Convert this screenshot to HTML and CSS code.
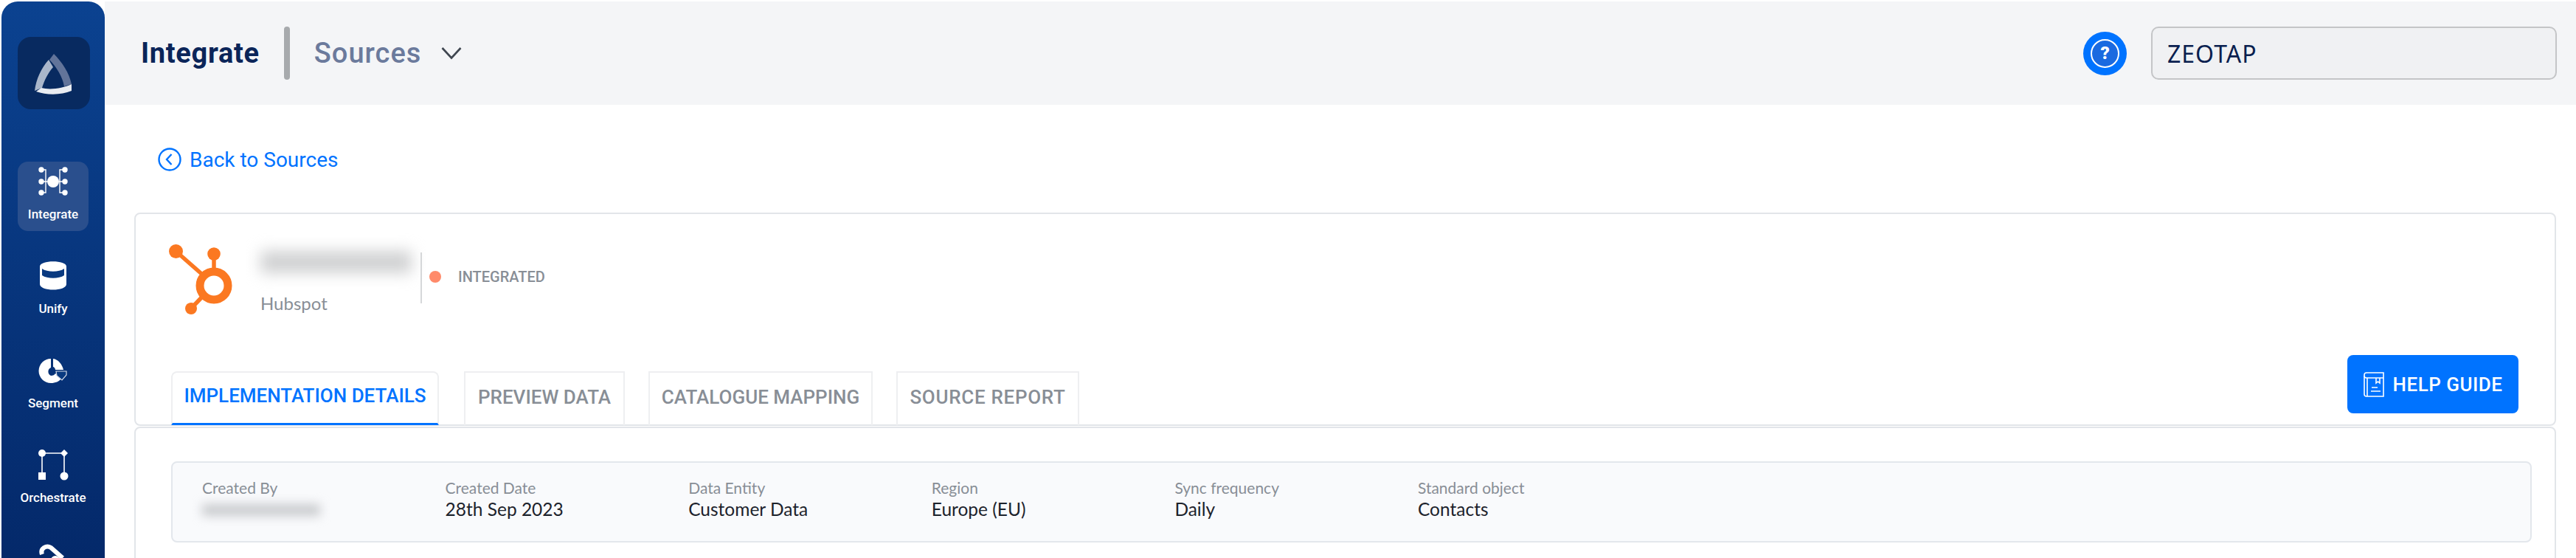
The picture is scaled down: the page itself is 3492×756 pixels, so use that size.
FILE: index.html
```html
<!DOCTYPE html>
<html lang="en">
<head>
    <meta charset="UTF-8">
    <title>Sources</title>
    <link rel="stylesheet" href="styles.css">
</head>
<body>
<div class="app">
    <aside class="sidebar">
        <div class="logo-tile">
            <svg width="60" height="60" viewBox="0 0 60 60">
                <path fill="#62749a" d="M30 4C41 15 51 30 54 45L44 48C42 35 33 21 24 12Z"/>
                <path fill="#a9b6ca" d="M23 12L29 22C22 30 17 40 14 50L4 54C6 38 13 23 23 12Z"/>
                <path fill="#e9ecf1" d="M13 50C24 53 42 51 54 45V54C40 60 20 60 6 55Z"/>
            </svg>
        </div>
        <nav class="nav">
            <a class="nav-item active" href="#">
                <svg width="42" height="42" viewBox="0 0 42 42" fill="none" stroke="#fff" stroke-width="1.400">
                    <path d="M5 5H11V36H5M5 21H13M37 5H30V36H37M37 21H29"/>
                    <g fill="#fff" stroke="none">
                        <circle cx="21" cy="21" r="8"/>
                        <circle cx="5" cy="5" r="3.700"/><circle cx="5" cy="21" r="3.700"/><circle cx="5" cy="36" r="3.700"/>
                        <circle cx="37" cy="5" r="3.700"/><circle cx="37" cy="21" r="3.700"/><circle cx="37" cy="36" r="3.700"/>
                    </g>
                </svg>
                <span>Integrate</span>
            </a>
            <a class="nav-item" href="#">
                <svg width="42" height="42" viewBox="0 0 42 42">
                    <path fill="#fff" d="M3 8C3 -1 39 -1 39 8V32C39 42 3 42 3 32Z"/>
                    <path fill="#0a3a80" d="M6 11C13 16 29 16 36 11V20C29 25 13 25 6 20Z"/>
                </svg>
                <span>Unify</span>
            </a>
            <a class="nav-item" href="#">
                <svg class="icon-low" width="42" height="36" viewBox="0 0 42 36">
                    <path fill="#fff" d="M18 1V13A6 6 0 0 0 18 24C21 24 23 23 24 21L33 27C29 32 24 34 18 34A16.500 16.500 0 0 1 18 1Z"/>
                    <path fill="#fff" d="M21 1C28 2 33 8 35 16H24C24 14 22 12 21 12Z"/>
                    <path fill="#0a3a80" stroke="#d5dbe6" stroke-width="1.200" d="M25 18H39V23L33 30L26 24Z"/>
                </svg>
                <span>Segment</span>
            </a>
            <a class="nav-item" href="#">
                <svg width="42" height="42" viewBox="0 0 42 42" fill="none" stroke="#fff" stroke-width="1.600">
                    <path d="M6 5H36V36M6 5V34"/>
                    <g fill="#fff" stroke="none">
                        <circle cx="6" cy="5" r="5"/>
                        <path d="M36 0L41 5L36 10L31 5Z"/>
                        <rect x="1" y="31" width="10" height="10"/>
                        <circle cx="36" cy="36" r="5.500"/>
                    </g>
                </svg>
                <span>Orchestrate</span>
            </a>
            <a class="nav-item" href="#">
                <svg width="42" height="42" viewBox="0 0 42 42" fill="none" stroke="#fff" stroke-width="6">
                    <path d="M6 14C3 6 12 1 18 5L34 19"/>
                    <circle cx="24" cy="22" r="6" fill="#fff" stroke="none"/>
                </svg>
            </a>
        </nav>
    </aside>

    <div class="main">
        <header class="topbar">
            <div class="crumbs">
                <span class="crumb-title">Integrate</span>
                <span class="crumb-sep"></span>
                <span class="crumb-sub">Sources</span>
                <svg class="crumb-chevron" width="28" height="18" viewBox="0 0 28 18" fill="none" stroke="#3f4650" stroke-width="2.600">
                    <path d="M1.500 2L14 15.500L26.500 2"/>
                </svg>
            </div>
            <div class="topbar-right">
                <div class="help-badge">
                    <div class="help-inner">?</div>
                </div>
                <div class="org-select">ZEOTAP</div>
            </div>
        </header>

        <div class="content">
            <a class="back-link" href="#">
                <svg width="32" height="32" viewBox="0 0 32 32" fill="none" stroke="#0073ff" stroke-width="2.400">
                    <circle cx="16" cy="16" r="14.500"/>
                    <path d="M18.500 9L12 16L18.500 23"/>
                </svg>
                Back to Sources
            </a>

            <section class="card card-top">
                <div class="source-head">
                    <svg class="source-logo" width="86" height="97" viewBox="0 0 86 97">
                        <g stroke="#fb7821" stroke-width="5.500" fill="none">
                            <path d="M9 10L50 46"/>
                            <path d="M61 14V40"/>
                            <path d="M30 88L49 68"/>
                            <circle cx="61" cy="57" r="19" stroke-width="11"/>
                        </g>
                        <g fill="#fb7821">
                            <circle cx="9.500" cy="10.500" r="9.500"/>
                            <circle cx="61" cy="14" r="8.800"/>
                            <circle cx="30" cy="88" r="8"/>
                        </g>
                    </svg>
                    <div class="source-name">
                        <div class="blur-name"></div>
                        <div class="source-type">Hubspot</div>
                    </div>
                    <div class="source-status">
                        <span class="status-dot"></span>
                        <span class="status-text">INTEGRATED</span>
                    </div>
                </div>

                <div class="tabs-row">
                    <div class="tabs">
                        <a class="tab active" href="#">IMPLEMENTATION DETAILS</a>
                        <a class="tab" href="#">PREVIEW DATA</a>
                        <a class="tab" href="#">CATALOGUE MAPPING</a>
                        <a class="tab" href="#">SOURCE REPORT</a>
                    </div>
                    <button class="help-guide">
                        <svg width="28" height="34" viewBox="0 0 28 34" fill="none" stroke="#fff" stroke-width="1.600">
                            <path d="M4 1H27V33H4C2 33 1 32 1 30V4C1 2 2 1 4 1Z"/>
                            <path d="M1 5C1 7 2 8 4 8H27M5 8V33"/>
                            <path d="M17 8V15L19.500 13L22 15V8M11 21H19M10 26H23"/>
                        </svg>
                        HELP GUIDE
                    </button>
                </div>
            </section>

            <section class="card card-bottom">
                <div class="info-box">
                    <div class="info-item">
                        <div class="info-label">Created By</div>
                        <div class="blur-value"></div>
                    </div>
                    <div class="info-item">
                        <div class="info-label">Created Date</div>
                        <div class="info-value">28th Sep 2023</div>
                    </div>
                    <div class="info-item">
                        <div class="info-label">Data Entity</div>
                        <div class="info-value">Customer Data</div>
                    </div>
                    <div class="info-item">
                        <div class="info-label">Region</div>
                        <div class="info-value">Europe (EU)</div>
                    </div>
                    <div class="info-item">
                        <div class="info-label">Sync frequency</div>
                        <div class="info-value">Daily</div>
                    </div>
                    <div class="info-item">
                        <div class="info-label">Standard object</div>
                        <div class="info-value">Contacts</div>
                    </div>
                </div>
            </section>
        </div>
    </div>
</div>
</body>
</html>
```

FILE: styles.css
```css
* {
    margin: 0;
    padding: 0;
    box-sizing: border-box;
}

html, body {
    height: 100%;
    overflow: hidden;
}

body {
    background-color: #fff;
    font-family: 'Lato', sans-serif;
    padding: 2px 0 0 2px;
}

a {
    text-decoration: none;
}

.app {
    display: flex;
    height: 100%;
}

/* left rail */
.sidebar {
    width: 140px;
    flex-shrink: 0;
    background: linear-gradient(180deg, #0b4290 0%, #04296a 100%);
    border-radius: 22px 22px 0 0;
    padding: 48px 22px 0;
    overflow: hidden;
    height: 754px;
}

.logo-tile {
    width: 98px;
    height: 98px;
    background-color: #082a60;
    border-radius: 18px;
    display: flex;
    align-items: center;
    justify-content: center;
}

.nav {
    display: flex;
    flex-direction: column;
    gap: 34px;
    margin-top: 71px;
}

.nav-item {
    height: 94px;
    flex-shrink: 0;
    border-radius: 14px;
    padding-top: 6px;
    display: flex;
    flex-direction: column;
    align-items: center;
    gap: 13px;
    color: #fff;
    font-family: 'Roboto', sans-serif;
    font-size: 17px;
    font-weight: 500;
}

.nav-item.active {
    background-color: #2a4f8d;
}

.icon-low {
    margin-top: 4px;
    margin-bottom: 2px;
}

/* top bar */
.main {
    flex: 1;
    min-width: 0;
}

.topbar {
    height: 140px;
    background-color: #f4f5f7;
    display: flex;
    align-items: center;
    justify-content: space-between;
    padding: 0 26px 0 49px;
}

.crumbs {
    display: flex;
    align-items: center;
}

.crumb-title {
    font-family: 'Roboto', sans-serif;
    font-size: 38px;
    font-weight: 700;
    letter-spacing: 0.7px;
    color: #0b2559;
}

.crumb-sep {
    width: 8px;
    height: 72px;
    background-color: #a7aaad;
    border-radius: 4px;
    margin: 0 33px;
}

.crumb-sub {
    font-family: 'Roboto', sans-serif;
    font-size: 38px;
    font-weight: 500;
    letter-spacing: 1px;
    color: #6b7a9c;
}

.crumb-chevron {
    margin-left: 27px;
}

.topbar-right {
    display: flex;
    align-items: center;
    gap: 33px;
}

.help-badge {
    width: 59px;
    height: 59px;
    border-radius: 50%;
    background-color: #0073ff;
    display: flex;
    align-items: center;
    justify-content: center;
}

.help-inner {
    width: 39px;
    height: 39px;
    border-radius: 50%;
    border: 2px solid #fff;
    background-color: #1a6ae0;
    color: #fff;
    font-family: 'Roboto', sans-serif;
    font-size: 24px;
    font-weight: 900;
    line-height: 35px;
    text-align: center;
}

.org-select {
    width: 550px;
    height: 72px;
    background-color: #f0f1f3;
    border: 2px solid #c4c5c7;
    border-radius: 10px;
    padding-left: 20px;
    display: flex;
    align-items: center;
    font-family: 'Noto Sans', sans-serif;
    font-size: 32px;
    letter-spacing: 1px;
    color: #0a1f4f;
}

/* content */
.content {
    padding: 58px 27px 0 40px;
}

.back-link {
    display: flex;
    align-items: center;
    gap: 11px;
    margin-left: 32px;
    height: 32px;
    color: #0073ff;
    font-family: 'Roboto', sans-serif;
    font-size: 28px;
}

.card {
    border: 2px solid #e2e5e9;
    background-color: #fff;
}

.card-top {
    margin-top: 56px;
    height: 289px;
    border-radius: 8px;
    padding: 40px 49px 0 45px;
}

.card-bottom {
    margin-top: 1px;
    height: 400px;
    border-radius: 8px 8px 0 0;
    padding: 45px 31px 0 48px;
}

.source-head {
    display: flex;
    align-items: flex-start;
}

.source-name {
    width: 217px;
    margin-left: 38px;
    padding-top: 10px;
}

.blur-name {
    width: 205px;
    height: 30px;
    background-color: #d0d1d2;
    filter: blur(10px);
}

.source-type {
    margin-top: 26px;
    font-size: 24px;
    color: #888e96;
}

.source-status {
    display: flex;
    align-items: center;
    height: 69px;
    margin-top: 12px;
    padding-left: 10px;
    border-left: 2px solid #d6d8da;
}

.status-dot {
    width: 16px;
    height: 16px;
    border-radius: 50%;
    background-color: #ff8a6a;
    margin-top: -4px;
}

.status-text {
    margin-left: 23px;
    margin-top: -4px;
    font-family: 'Roboto', sans-serif;
    font-size: 20px;
    font-weight: 500;
    color: #888e96;
}

.tabs-row {
    display: flex;
    justify-content: space-between;
    align-items: flex-start;
    margin-top: 54px;
    padding-left: 3px;
}

.tabs {
    display: flex;
    gap: 32px;
    margin-top: 22px;
}

.tab {
    width: 248px;
    height: 73px;
    border: 2px solid #eeeff1;
    border-bottom: none;
    display: flex;
    align-items: center;
    justify-content: center;
    padding-bottom: 6px;
    font-family: 'Roboto', sans-serif;
    font-size: 26px;
    font-weight: 500;
    color: #888e96;
}

.tab:nth-child(1) {
    width: 363px;
    margin-right: 2px;
}

.tab:nth-child(2) {
    width: 218px;
}

.tab:nth-child(3) {
    width: 304px;
}

.tab:nth-child(4) {
    letter-spacing: 0.7px;
}

.tab.active {
    color: #0073ff;
    border-radius: 8px 8px 0 0;
    border-bottom: 3px solid #0073ff;
}

.help-guide {
    width: 232px;
    height: 79px;
    background-color: #0073ff;
    border: none;
    border-radius: 8px;
    color: #fff;
    font-family: 'Roboto', sans-serif;
    font-size: 26px;
    font-weight: 500;
    letter-spacing: 0.5px;
    display: flex;
    align-items: center;
    justify-content: center;
    gap: 12px;
}

.info-box {
    height: 110px;
    background-color: #f9fafc;
    border: 2px solid #e3e7ec;
    border-radius: 8px;
    padding: 20px 0 0 40px;
    display: flex;
}

.info-item {
    width: 329.600px;
}

.info-label {
    font-size: 21px;
    line-height: 27px;
    color: #888e96;
}

.info-value {
    font-size: 24.500px;
    line-height: 30px;
    margin-top: 1px;
    color: #1d232c;
}

.blur-value {
    width: 160px;
    height: 16px;
    margin-top: 9px;
    background-color: #c9cbce;
    filter: blur(7px);
}
```
